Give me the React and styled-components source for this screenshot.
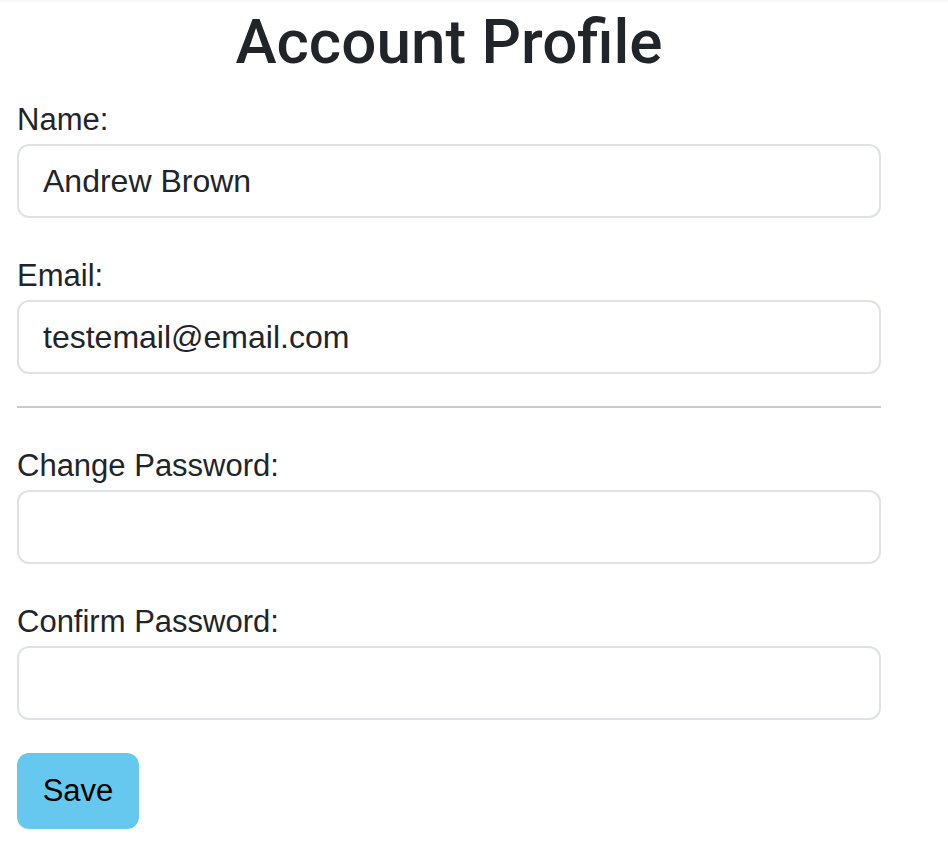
import React, { useState } from 'react';
import styled, { createGlobalStyle } from 'styled-components';

const GlobalStyle = createGlobalStyle`
    body {
        margin: 0;
        background: #ffffff;
        font-family: "Liberation Sans", Arial, sans-serif;
        color: #212529;
    }
    * { box-sizing: border-box; }
`;

const TopStrip = styled.div`
    height: 2px;
    background: #f5f6f7;
`;

const Page = styled.div`
    width: 864px;
    margin-left: 17px;
`;

const Title = styled.h1`
    margin: 3px 0 18px;
    text-align: center;
    font-family: Roboto, "Liberation Sans", sans-serif;
    font-size: 62px;
    line-height: 74px;
    font-weight: 500;
    color: #212529;
`;

const Group = styled.div`
    margin-bottom: ${props => props.$gap || 35}px;
`;

const Label = styled.label`
    display: block;
    font-size: 31px;
    line-height: 45px;
    margin-bottom: 2px;
`;

const Input = styled.input`
    display: block;
    width: 100%;
    height: 74px;
    padding: 0 24px;
    border: 2px solid #dee2e6;
    border-radius: 12px;
    font-family: inherit;
    font-size: 32px;
    color: #212529;
    outline: none;
`;

const Divider = styled.hr`
    margin: -3px 0 35px;
    border: 0;
    border-top: 2px solid #cbcbcb;
`;

const SaveButton = styled.button`
    width: 122px;
    height: 76px;
    border: 0;
    border-radius: 12px;
    background: #66c8ef;
    color: #000;
    font-family: inherit;
    font-size: 31px;
    cursor: pointer;
`;

function App() {
    let [name, setName] = useState('Andrew Brown');
    let [email, setEmail] = useState('testemail@email.com');
    let [pw, setPw] = useState('');
    let [pw2, setPw2] = useState('');

    return (
        <>
            <GlobalStyle />
            <TopStrip />
            <Page>
                <Title>Account Profile</Title>

                <Group>
                    <Label>Name:</Label>
                    <Input value={name} onChange={(e) => { setName(e.target.value) }} />
                </Group>
                <Group>
                    <Label>Email:</Label>
                    <Input value={email} onChange={(e) => { setEmail(e.target.value) }} />
                </Group>

                <Divider />

                <Group>
                    <Label>Change Password:</Label>
                    <Input type="password" value={pw} onChange={(e) => { setPw(e.target.value) }} />
                </Group>
                <Group $gap={33}>
                    <Label>Confirm Password:</Label>
                    <Input type="password" value={pw2} onChange={(e) => { setPw2(e.target.value) }} />
                </Group>

                <SaveButton>Save</SaveButton>
            </Page>
        </>
    )
}

export default App;
